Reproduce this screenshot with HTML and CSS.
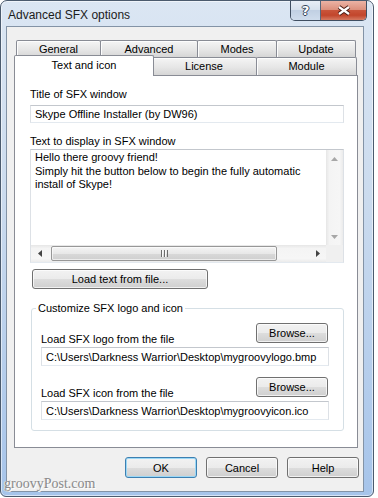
FILE: index.html
```html
<!DOCTYPE html>
<html lang="en">
<head>
    <meta charset="UTF-8">
    <title>Advanced SFX options</title>
    <link rel="stylesheet" href="styles.css">
</head>
<body>
    <div class="window">
        <div class="titlebar">
            <span class="title">Advanced SFX options</span>
            <div class="caption-buttons">
                <span class="cap-btn cap-help">?</span>
                <span class="cap-btn cap-close">
                    <svg width="16" height="11" viewBox="0 0 16 11">
                        <path d="M3 2 L13 9 M13 2 L3 9" stroke="#4a1c14" stroke-width="4.2" fill="none"/>
                        <path d="M3 2 L13 9 M13 2 L3 9" stroke="#fff" stroke-width="2.2" fill="none"/>
                    </svg>
                </span>
            </div>
        </div>

        <div class="client">
            <div class="tabs">
                <div class="tab-row tab-row-back">
                    <div class="tab tab-general">General</div>
                    <div class="tab tab-advanced">Advanced</div>
                    <div class="tab tab-modes">Modes</div>
                    <div class="tab tab-update">Update</div>
                </div>
                <div class="tab-row tab-row-front">
                    <div class="tab tab-text selected">Text and icon</div>
                    <div class="tab tab-license">License</div>
                    <div class="tab tab-module">Module</div>
                </div>
            </div>

            <div class="tab-panel">
                <label class="field-label">Title of SFX window</label>
                <input type="text" class="edit" value="Skype Offline Installer (by DW96)" readonly>

                <label class="field-label memo-label">Text to display in SFX window</label>
                <div class="memo">
                    <div class="memo-text">Hello there groovy friend!<br>Simply hit the button below to begin the fully automatic<br>install of Skype!</div>
                    <div class="vscroll">
                        <span class="arrow-btn">
                            <svg width="7" height="4" viewBox="0 0 7 4"><path d="M0 4 L3.5 0 L7 4z" fill="#a7a7a7"/></svg>
                        </span>
                        <span class="arrow-btn">
                            <svg width="7" height="4" viewBox="0 0 7 4"><path d="M0 0 L3.5 4 L7 0z" fill="#a7a7a7"/></svg>
                        </span>
                    </div>
                    <div class="hscroll">
                        <span class="arrow-btn">
                            <svg width="4" height="7" viewBox="0 0 4 7"><path d="M4 0 L0 3.5 L4 7z" fill="#444"/></svg>
                        </span>
                        <div class="track">
                            <div class="thumb"><span class="grip"></span></div>
                        </div>
                        <span class="arrow-btn">
                            <svg width="4" height="7" viewBox="0 0 4 7"><path d="M0 0 L4 3.5 L0 7z" fill="#444"/></svg>
                        </span>
                    </div>
                    <div class="scroll-corner"></div>
                </div>

                <button type="button" class="btn btn-load">Load text from file...</button>

                <fieldset class="group">
                    <legend>Customize SFX logo and icon</legend>
                    <div class="file-row">
                        <label>Load SFX logo from the file</label>
                        <button type="button" class="btn btn-browse">Browse...</button>
                    </div>
                    <input type="text" class="edit file-edit" value="C:\Users\Darkness Warrior\Desktop\mygroovylogo.bmp" readonly>

                    <div class="file-row file-row-next">
                        <label>Load SFX icon from the file</label>
                        <button type="button" class="btn btn-browse">Browse...</button>
                    </div>
                    <input type="text" class="edit file-edit" value="C:\Users\Darkness Warrior\Desktop\mygroovyicon.ico" readonly>
                </fieldset>
            </div>

            <div class="dialog-buttons">
                <button type="button" class="btn btn-dialog btn-default">OK</button>
                <button type="button" class="btn btn-dialog">Cancel</button>
                <button type="button" class="btn btn-dialog">Help</button>
            </div>
        </div>

        <div class="watermark">groovyPost.com</div>
    </div>
</body>
</html>
```

FILE: styles.css
```css
* {
    box-sizing: border-box;
}

body {
    margin: 0;
    background: #fff;
    font-family: "Liberation Sans", Arial, sans-serif;
    font-size: 11px;
    color: #000;
}

/* window frame */
.window {
    position: relative;
    width: 374px;
    height: 497px;
    display: flex;
    flex-direction: column;
    padding: 0 9px 4px 5px;
    border: 1px solid #4b5b6e;
    border-radius: 7px 7px 6px 6px;
    background: linear-gradient(#dbe6f3, #cbdbee 40%, #a6c4ea);
    box-shadow: inset 0 0 0 1px rgba(255,255,255,0.55);
}

.titlebar {
    display: flex;
    height: 25px;
    flex-shrink: 0;
}

.title {
    padding: 7px 0 0 2px;
    font-size: 12px;
    line-height: 15px;
    color: #1b1b1b;
}

.caption-buttons {
    display: flex;
    height: 20px;
    margin-left: auto;
    margin-right: -3px;
    border: 1px solid #3f4e61;
    border-top: none;
    border-radius: 0 0 5px 5px;
    overflow: hidden;
}

.cap-btn {
    display: flex;
    align-items: center;
    justify-content: center;
}

.cap-help {
    width: 30px;
    border-right: 1px solid #56677c;
    background: linear-gradient(#e8eef6, #d7e1ed 45%, #c1d0e3 50%, #cfdcec);
    color: #fff;
    font-family: "DejaVu Sans", sans-serif;
    font-weight: bold;
    font-size: 13px;
    text-shadow: 1px 0 0 #33435a, -1px 0 0 #33435a, 0 1px 0 #33435a, 0 -1px 0 #33435a;
}

.cap-close {
    width: 45px;
    background: linear-gradient(#ebb3a5, #dc907d 45%, #c9543a 50%, #c2462c 75%, #d57a62);
}

.client {
    flex: 1;
    display: flex;
    flex-direction: column;
    background: #f0f0f0;
    border: 1px solid #8393a6;
}

/* tabs */
.tabs {
    width: 344px;
    margin: 13px 0 0 7px;
}

.tab-row {
    display: flex;
    padding-left: 2px;
}

.tab {
    text-align: center;
    white-space: nowrap;
    border: 1px solid #898c95;
    border-bottom: none;
    border-radius: 2px 2px 0 0;
    background: linear-gradient(#f5f5f5, #e6e6e6 55%, #d6d6d6);
    box-shadow: inset 1px 1px 0 #fdfdfd;
}

.tab + .tab {
    margin-left: -1px;
}

.tab-row-back .tab {
    height: 17px;
    line-height: 16px;
}

.tab-row-front .tab {
    height: 18px;
    line-height: 17px;
}

.tab-general { width: 85px; }
.tab-advanced { width: 98px; }
.tab-modes { width: 80px; }
.tab-update { width: 80px; }
.tab-text { width: 136px; }
.tab-license { width: 106px; }
.tab-module { width: 101px; }

.tab-row-front .tab.selected {
    position: relative;
    z-index: 1;
    width: 140px;
    height: 21px;
    margin: -2px -2px -1px -2px;
    line-height: 19px;
    background: #fff;
    box-shadow: none;
}

.tab-panel {
    width: 344px;
    height: 373px;
    margin-left: 7px;
    padding: 12px 13px 0 15px;
    border: 1px solid #898c95;
    background: #fff;
}

.field-label {
    display: block;
    line-height: 13px;
    margin-bottom: 4px;
}

.memo-label {
    margin-top: 12px;
    margin-bottom: 1px;
}

.edit {
    display: block;
    width: 100%;
    height: 18px;
    margin: 0;
    padding: 0 4px;
    border: 1px solid;
    border-color: #c3c7cd #dde1e6 #e3e9ef #dde1e6;
    background: #fff;
    font: inherit;
    color: #000;
    outline: none;
}

/* multiline text box */
.memo {
    display: grid;
    grid-template-columns: 1fr 17px;
    grid-template-rows: 1fr 17px;
    height: 114px;
    border: 1px solid;
    border-color: #c3c7cd #dde1e6 #e3e9ef #dde1e6;
}

.memo-text {
    padding: 1px 4px;
    line-height: 13.5px;
    white-space: nowrap;
    overflow: hidden;
}

.vscroll {
    display: flex;
    flex-direction: column;
    justify-content: space-between;
    background: linear-gradient(90deg, #e6e6e6, #f4f4f4 20%, #f6f6f6 80%, #ebebeb);
}

.hscroll {
    display: flex;
    background: linear-gradient(#e6e6e6, #f4f4f4 20%, #f6f6f6 80%, #ebebeb);
}

.arrow-btn {
    display: flex;
    align-items: center;
    justify-content: center;
    width: 17px;
    height: 17px;
    flex-shrink: 0;
}

.track {
    flex: 1;
    padding: 1px 0 1px 3px;
}

.thumb {
    display: flex;
    align-items: center;
    justify-content: center;
    width: 226px;
    height: 15px;
    border: 1px solid #979797;
    border-radius: 2px;
    background: linear-gradient(#f4f4f4, #e8e8e8 50%, #d9d9d9 51%, #cfcfcf);
    box-shadow: inset 0 0 0 1px rgba(255,255,255,0.6);
}

.grip {
    width: 7px;
    height: 7px;
    background: repeating-linear-gradient(90deg, #6e6e6e 0 1px, #fafafa 1px 2px, transparent 2px 3px);
}

.scroll-corner {
    background: #f0f0f0;
}

/* push buttons */
.btn {
    height: 20px;
    padding: 0;
    border: 1px solid #707070;
    border-radius: 3px;
    background: linear-gradient(#f2f2f2, #ebebeb 50%, #dddddd 51%, #cfcfcf);
    box-shadow: inset 0 0 0 1px rgba(255,255,255,0.7);
    font: inherit;
    color: #000;
}

.btn-load {
    display: block;
    width: 176px;
    margin: 6px 0 0 2px;
}

/* group box */
.group {
    min-width: 0;
    margin: 13px 0 0 1px;
    padding: 8px 14px 10px 9px;
    border: 1px solid #d5dfe5;
    border-radius: 3px;
}

.group legend {
    margin-left: -5px;
    padding: 0 2px;
    line-height: 13px;
}

.file-row {
    display: flex;
    align-items: flex-end;
    justify-content: space-between;
}

.file-row label {
    line-height: 13px;
    margin-bottom: -3px;
}

.file-row-next {
    margin-top: 11px;
}

.btn-browse {
    width: 72px;
    margin-right: 1px;
}

.file-edit {
    height: 19px;
    margin-top: 4px;
}

/* OK / Cancel / Help */
.dialog-buttons {
    display: flex;
    justify-content: flex-end;
    gap: 9px;
    margin: 9px 4px 0 0;
}

.btn-dialog {
    width: 72px;
    height: 21px;
}

.btn-default {
    border-color: #3c7fb1;
    box-shadow: inset 0 0 0 1px #9bd8f6;
}

.watermark {
    position: absolute;
    left: 3px;
    bottom: 4px;
    font-family: "Liberation Serif", serif;
    font-size: 14px;
    color: #8a8a8a;
    text-shadow: 1px 1px 0 #fff, -1px 0 0 #e8e8e8;
}
```
